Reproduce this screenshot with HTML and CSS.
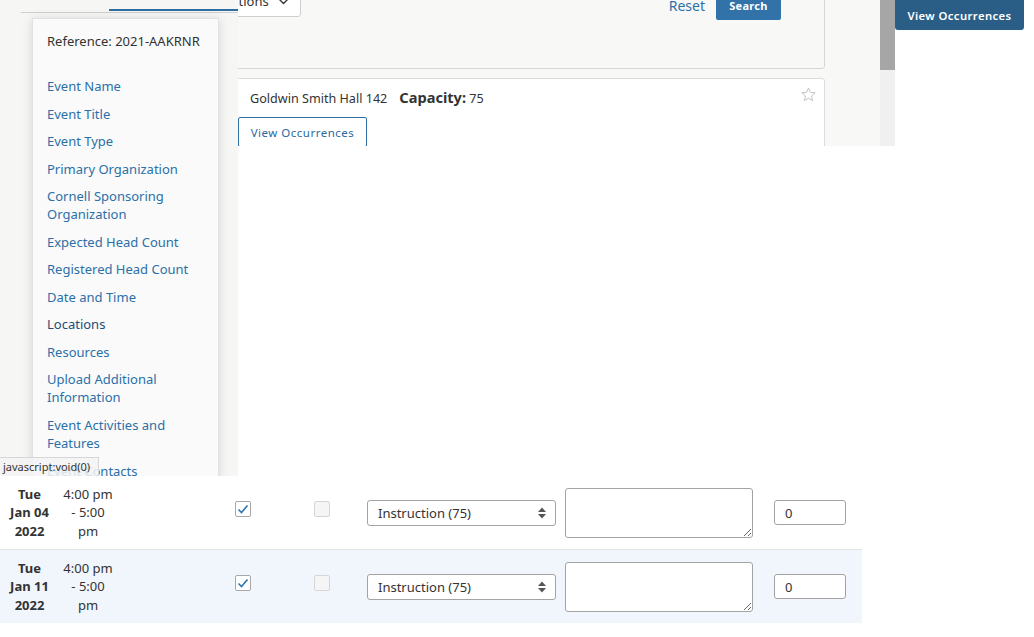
FILE: index.html
```html
<!DOCTYPE html>
<html lang="en">
<head>
<meta charset="utf-8">
<title>Event Form – Locations</title>
<link rel="stylesheet" href="styles.css">
</head>
<body>
<div class="top">
  <aside class="side">
    <div class="tabs"><div class="tab-active"></div></div>
    <nav class="menu">
      <div class="ref">Reference: 2021-AAKRNR</div>
      <ul class="menu-list">
        <li><a href="#">Event Name</a></li>
        <li><a href="#">Event Title</a></li>
        <li><a href="#">Event Type</a></li>
        <li><a href="#">Primary Organization</a></li>
        <li><a href="#">Cornell Sponsoring Organization</a></li>
        <li><a href="#">Expected Head Count</a></li>
        <li><a href="#">Registered Head Count</a></li>
        <li><a href="#">Date and Time</a></li>
        <li><a class="current" href="#">Locations</a></li>
        <li><a href="#">Resources</a></li>
        <li><a href="#">Upload Additional Information</a></li>
        <li><a href="#">Event Activities and Features</a></li>
        <li><a href="#">Event Contacts</a></li>
      </ul>
    </nav>
    <div class="status">javascript:void(0)</div>
  </aside>

  <main class="center">
    <div class="filter-card">
      <button class="actions" type="button">Actions
        <svg class="chev" width="11" height="7" viewBox="0 0 11 7"><polyline points="1,1 5.5,5.5 10,1" fill="none" stroke="#333" stroke-width="1.4"/></svg>
      </button>
      <div class="filter-actions">
        <a class="reset" href="#">Reset</a>
        <button class="search" type="button">Search</button>
      </div>
    </div>

    <div class="loc-card">
      <div class="loc-row">
        <span class="loc-name">Goldwin Smith Hall 142</span>
        <span class="cap"><b>Capacity:</b> 75</span>
        <svg class="star" width="15" height="15" viewBox="0 0 15 15"><polygon points="7.5,1 9.38,5.41 14.16,5.84 10.54,8.99 11.61,13.66 7.5,11.2 3.39,13.66 4.46,8.99 0.84,5.84 5.62,5.41" fill="#fff" stroke="#c4c4c4" stroke-width="1" stroke-linejoin="round"/></svg>
      </div>
      <button class="occ-btn" type="button">View Occurrences</button>
    </div>
  </main>

  <div class="scrollbar"><div class="thumb"></div></div>

  <div class="right">
    <button class="occ-primary" type="button">View Occurrences</button>
  </div>
</div>

<div class="occ-table">
  <div class="occ-row">
    <div class="c-date">Tue<br>Jan 04<br>2022</div>
    <div class="c-time">4:00 pm - 5:00 pm</div>
    <span class="cb checked"><svg width="14" height="14" viewBox="0 0 14 14"><polyline points="2.5,7.5 5.5,10.5 11.5,3.5" fill="none" stroke="#2b74b3" stroke-width="1.6"/></svg></span>
    <span class="cb disabled"></span>
    <span class="select-wrap">
      <select class="sel"><option>Instruction (75)</option></select>
      <svg class="sel-arrows" width="8" height="12" viewBox="0 0 8 12"><polygon points="0,5 4,0.5 8,5" fill="#555"/><polygon points="0,7 8,7 4,11.5" fill="#555"/></svg>
    </span>
    <textarea class="notes"></textarea>
    <input class="num" type="text" value="0">
  </div>
  <div class="occ-row alt">
    <div class="c-date">Tue<br>Jan 11<br>2022</div>
    <div class="c-time">4:00 pm - 5:00 pm</div>
    <span class="cb checked"><svg width="14" height="14" viewBox="0 0 14 14"><polyline points="2.5,7.5 5.5,10.5 11.5,3.5" fill="none" stroke="#2b74b3" stroke-width="1.6"/></svg></span>
    <span class="cb disabled"></span>
    <span class="select-wrap">
      <select class="sel"><option>Instruction (75)</option></select>
      <svg class="sel-arrows" width="8" height="12" viewBox="0 0 8 12"><polygon points="0,5 4,0.5 8,5" fill="#555"/><polygon points="0,7 8,7 4,11.5" fill="#555"/></svg>
    </span>
    <textarea class="notes"></textarea>
    <input class="num" type="text" value="0">
  </div>
</div>
</body>
</html>
```

FILE: styles.css
```css
* { box-sizing: border-box; }

html, body { margin: 0; padding: 0; }

body {
  width: 1034px;
  height: 637px;
  overflow: hidden;
  background: #fff;
  font-family: "Noto Sans", "Liberation Sans", sans-serif;
  font-size: 13px;
  color: #333;
}

/* ---------- top strip ---------- */
.top {
  display: flex;
  align-items: flex-start;
}

.side {
  flex: none;
  width: 238px;
  height: 476px;
  background: #f6f6f5;
  position: relative;
  overflow: hidden;
}

.tabs {
  margin-left: 21px;
  height: 13px;
  border-bottom: 1px solid #cfcfcf;
}

.tab-active {
  margin-left: 88px;
  height: 11px;
  border-bottom: 2px solid #2d6ea3;
}

.menu {
  position: absolute;
  left: 32px;
  top: 18px;
  width: 187px;
  height: 480px;
  background: #fafafa;
  border: 1px solid #e2e2e2;
  box-shadow: 0 1px 10px rgba(0, 0, 0, 0.13);
  padding: 13px 12px 0 14px;
}

.ref {
  line-height: 18px;
  margin-bottom: 27px;
  color: #333;
}

.menu-list {
  list-style: none;
  margin: 0;
  padding: 0;
}

.menu-list li {
  line-height: 18.2px;
  margin-bottom: 9.3px;
}

.menu-list a {
  color: #2a70a8;
  text-decoration: none;
}

.menu-list a.current {
  color: #1d4d78;
}

.status {
  position: absolute;
  left: 0;
  bottom: 0;
  width: 99px;
  height: 19px;
  background: rgba(243, 243, 243, 0.86);
  border-top: 1px solid #d6d6d6;
  border-right: 1px solid #d6d6d6;
  font-size: 11px;
  line-height: 18px;
  padding-left: 3px;
  color: #333;
  white-space: nowrap;
}

/* ---------- center ---------- */
.center {
  flex: none;
  width: 642px;
  height: 146px;
  overflow: hidden;
  background: #f8f8f7;
  padding-right: 55px;
}

.filter-card {
  height: 85px;
  margin: -16px 0 0 -40px;
  border: 1px solid #d6d6d6;
  border-radius: 3px;
  background: #f8f8f7;
  padding: 0 43px 0 12px;
  display: flex;
  justify-content: space-between;
  align-items: flex-start;
}

.actions {
  height: 32px;
  display: flex;
  align-items: center;
  gap: 9px;
  padding: 0 11px 0 12px;
  border: 1px solid #cfcfcf;
  border-radius: 3px;
  background: #fff;
  font-family: inherit;
  font-size: 13px;
  color: #333;
}

.filter-actions {
  display: flex;
  align-items: center;
  gap: 11px;
  margin-top: 5px;
}

.reset {
  color: #2a70a8;
  font-size: 14px;
  text-decoration: none;
}

.search {
  width: 65px;
  height: 30px;
  background: #3173a8;
  color: #fff;
  border: none;
  border-radius: 2px;
  font-family: inherit;
  font-weight: 700;
  font-size: 11px;
  letter-spacing: 0.3px;
  padding: 0;
}

.loc-card {
  margin: 9px 0 0 -40px;
  background: #fff;
  border: 1px solid #dcdcdc;
  border-radius: 3px;
  padding: 9px 8px 20px 39px;
}

.loc-row {
  display: flex;
  align-items: baseline;
  line-height: 18px;
  height: 18px;
  padding-left: 12px;
  font-size: 12.6px;
}

.cap {
  margin-left: 12px;
}

.cap b {
  font-size: 14.6px;
  font-weight: 700;
}

.star {
  margin-left: auto;
  align-self: flex-start;
  margin-top: -1px;
}

.occ-btn {
  display: block;
  margin-top: 11px;
  width: 129px;
  height: 30px;
  border: 1px solid #2f6fa5;
  border-radius: 2px;
  background: #fff;
  color: #2a6aa0;
  font-family: inherit;
  font-size: 11.5px;
  letter-spacing: 0.5px;
  padding: 0;
}

/* ---------- scrollbar & right ---------- */
.scrollbar {
  flex: none;
  width: 15px;
  height: 146px;
  background: #f0f0f0;
}

.thumb {
  height: 70px;
  background: #a6a6a6;
}

.right {
  flex: none;
  width: 139px;
}

.occ-primary {
  display: block;
  width: 129px;
  height: 30px;
  background: #2a5e86;
  color: #fff;
  border: none;
  border-radius: 0 0 3px 3px;
  font-family: inherit;
  font-weight: 600;
  font-size: 11.3px;
  letter-spacing: 0.4px;
  padding: 0;
}

/* ---------- occurrences table ---------- */
.occ-table {
  width: 862px;
}

.occ-row {
  display: flex;
  align-items: center;
  height: 74px;
  border-bottom: 1px solid #e3e3e3;
}

.occ-row.alt {
  background: #f1f5fc;
  border-bottom: none;
  height: 73px;
}

.c-date {
  flex: none;
  width: 59px;
  text-align: center;
  font-weight: 700;
  line-height: 18.5px;
}

.c-time {
  flex: none;
  width: 58px;
  padding: 0 3px;
  text-align: center;
  line-height: 18.5px;
}

.cb {
  flex: none;
  width: 16px;
  height: 16px;
  border-radius: 2px;
  display: flex;
  align-items: center;
  justify-content: center;
  margin-bottom: 7px;
}

.cb.checked {
  margin-left: 118px;
  background: #fff;
  border: 1px solid #a8a8a8;
}

.cb.disabled {
  margin-left: 63px;
  background: #f5f5f5;
  border: 1px solid #d6d6d6;
}

.select-wrap {
  flex: none;
  position: relative;
  margin-left: 37px;
  width: 189px;
  height: 26px;
}

.sel {
  -webkit-appearance: none;
  appearance: none;
  display: block;
  width: 189px;
  height: 26px;
  border: 1px solid #a3a3a3;
  border-radius: 3px;
  padding: 0 24px 0 10px;
  background: #fff;
  font-family: inherit;
  font-size: 13px;
  color: #333;
}

.sel-arrows {
  position: absolute;
  right: 10px;
  top: 7px;
  pointer-events: none;
}

.notes {
  flex: none;
  display: block;
  margin: 0 0 0 9px;
  width: 188px;
  height: 50px;
  border: 1px solid #a3a3a3;
  border-radius: 3px;
  background: #fff;
  font-family: inherit;
  font-size: 13px;
  padding: 4px 8px;
}

.num {
  flex: none;
  margin: 0 0 0 21px;
  width: 72px;
  height: 25px;
  border: 1px solid #a3a3a3;
  border-radius: 3px;
  padding: 0 0 0 10px;
  background: #fff;
  font-family: inherit;
  font-size: 13px;
  color: #333;
}
```
